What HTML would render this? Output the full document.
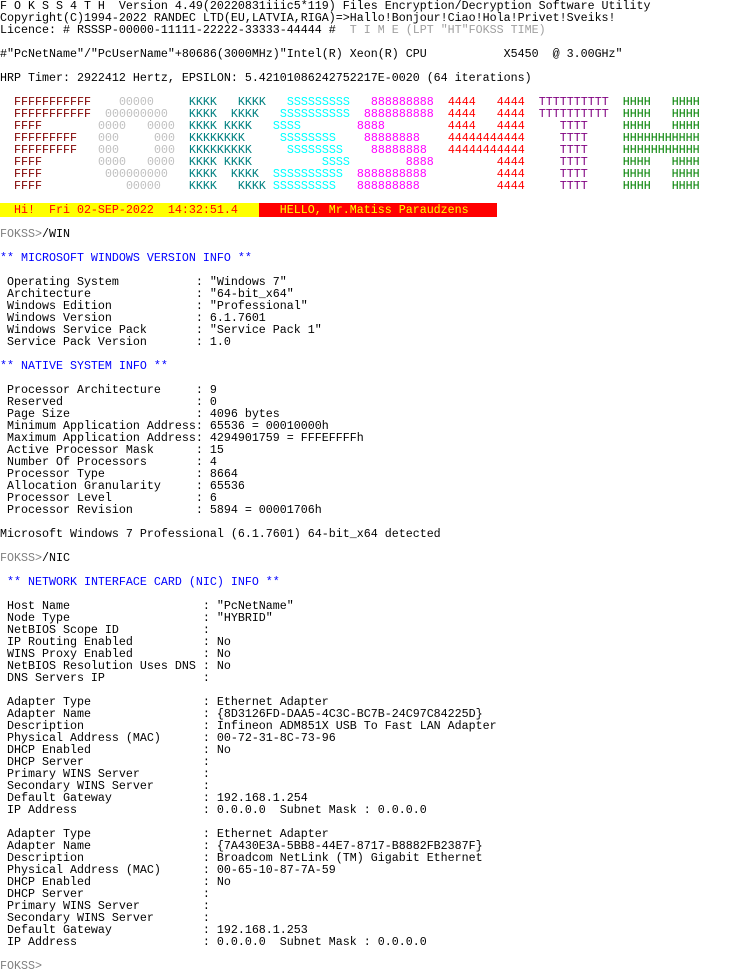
<!DOCTYPE html>
<html><head><meta charset="utf-8">
<style>
html,body{margin:0;padding:0;background:#fff;width:730px;height:974px;overflow:hidden}
pre{margin:0;position:absolute;left:0;top:0;font-family:"Liberation Mono",monospace;font-size:11.67px;line-height:12px;color:#000;white-space:pre}
.g{color:#a0a0a0}.gp{color:#808080}
.b{color:#0000ff}
.F{color:#800000}.O{color:#c0c0c0}.K{color:#008080}.S{color:#00ffff}.E{color:#ff00ff}.R{color:#ff0000}.T{color:#800080}.H{color:#008000}
.yb{background:#ffff00;color:#ff0000}.rb{background:#ff0000;color:#ffff00}
</style></head><body>
<pre>F O K S S 4 T H  Version 4.49(20220831iiic5*119) Files Encryption/Decryption Software Utility
Copyright(C)1994-2022 RANDEC LTD(EU,LATVIA,RIGA)=&gt;Hallo!Bonjour!Ciao!Hola!Privet!Sveiks!
Licence: # RSSSP-00000-11111-22222-33333-44444 #<span class="g">  T I M E (LPT "HT"FOKSS TIME)</span>

#"PcNetName"/"PcUserName"+80686(3000MHz)"Intel(R) Xeon(R) CPU           X5450  @ 3.00GHz"

HRP Timer: 2922412 Hertz, EPSILON: 5.42101086242752217E-0020 (64 iterations)

  <span class="F">FFFFFFFFFFF</span>    <span class="O">00000</span>     <span class="K">KKKK</span>   <span class="K">KKKK</span>   <span class="S">SSSSSSSSS</span>   <span class="E">888888888</span>  <span class="R">4444</span>   <span class="R">4444</span>  <span class="T">TTTTTTTTTT</span>  <span class="H">HHHH</span>   <span class="H">HHHH</span>
  <span class="F">FFFFFFFFFFF</span>  <span class="O">000000000</span>   <span class="K">KKKK</span>  <span class="K">KKKK</span>   <span class="S">SSSSSSSSSS</span>  <span class="E">8888888888</span>  <span class="R">4444</span>   <span class="R">4444</span>  <span class="T">TTTTTTTTTT</span>  <span class="H">HHHH</span>   <span class="H">HHHH</span>
  <span class="F">FFFF</span>        <span class="O">0000</span>   <span class="O">0000</span>  <span class="K">KKKK</span> <span class="K">KKKK</span>   <span class="S">SSSS</span>        <span class="E">8888</span>         <span class="R">4444</span>   <span class="R">4444</span>     <span class="T">TTTT</span>     <span class="H">HHHH</span>   <span class="H">HHHH</span>
  <span class="F">FFFFFFFFF</span>   <span class="O">000</span>     <span class="O">000</span>  <span class="K">KKKKKKKK</span>     <span class="S">SSSSSSSS</span>    <span class="E">88888888</span>    <span class="R">44444444444</span>     <span class="T">TTTT</span>     <span class="H">HHHHHHHHHHH</span>
  <span class="F">FFFFFFFFF</span>   <span class="O">000</span>     <span class="O">000</span>  <span class="K">KKKKKKKKK</span>     <span class="S">SSSSSSSS</span>    <span class="E">88888888</span>   <span class="R">44444444444</span>     <span class="T">TTTT</span>     <span class="H">HHHHHHHHHHH</span>
  <span class="F">FFFF</span>        <span class="O">0000</span>   <span class="O">0000</span>  <span class="K">KKKK</span> <span class="K">KKKK</span>          <span class="S">SSSS</span>        <span class="E">8888</span>         <span class="R">4444</span>     <span class="T">TTTT</span>     <span class="H">HHHH</span>   <span class="H">HHHH</span>
  <span class="F">FFFF</span>         <span class="O">000000000</span>   <span class="K">KKKK</span>  <span class="K">KKKK</span>  <span class="S">SSSSSSSSSS</span>  <span class="E">8888888888</span>          <span class="R">4444</span>     <span class="T">TTTT</span>     <span class="H">HHHH</span>   <span class="H">HHHH</span>
  <span class="F">FFFF</span>            <span class="O">00000</span>    <span class="K">KKKK</span>   <span class="K">KKKK</span> <span class="S">SSSSSSSSS</span>   <span class="E">888888888</span>           <span class="R">4444</span>     <span class="T">TTTT</span>     <span class="H">HHHH</span>   <span class="H">HHHH</span>

<span class="yb">  Hi!  Fri 02-SEP-2022  14:32:51.4   </span><span class="rb">   HELLO, Mr.Matiss Paraudzens    </span>

<span class="gp">FOKSS&gt;</span>/WIN

<span class="b">** MICROSOFT WINDOWS VERSION INFO **</span>

 Operating System           : "Windows 7"
 Architecture               : "64-bit_x64"
 Windows Edition            : "Professional"
 Windows Version            : 6.1.7601
 Windows Service Pack       : "Service Pack 1"
 Service Pack Version       : 1.0

<span class="b">** NATIVE SYSTEM INFO **</span>

 Processor Architecture     : 9
 Reserved                   : 0
 Page Size                  : 4096 bytes
 Minimum Application Address: 65536 = 00010000h
 Maximum Application Address: 4294901759 = FFFEFFFFh
 Active Processor Mask      : 15
 Number Of Processors       : 4
 Processor Type             : 8664
 Allocation Granularity     : 65536
 Processor Level            : 6
 Processor Revision         : 5894 = 00001706h

Microsoft Windows 7 Professional (6.1.7601) 64-bit_x64 detected

<span class="gp">FOKSS&gt;</span>/NIC

 <span class="b">** NETWORK INTERFACE CARD (NIC) INFO **</span>

 Host Name                   : "PcNetName"
 Node Type                   : "HYBRID"
 NetBIOS Scope ID            :
 IP Routing Enabled          : No
 WINS Proxy Enabled          : No
 NetBIOS Resolution Uses DNS : No
 DNS Servers IP              :

 Adapter Type                : Ethernet Adapter
 Adapter Name                : {8D3126FD-DAA5-4C3C-BC7B-24C97C84225D}
 Description                 : Infineon ADM851X USB To Fast LAN Adapter
 Physical Address (MAC)      : 00-72-31-8C-73-96
 DHCP Enabled                : No
 DHCP Server                 :
 Primary WINS Server         :
 Secondary WINS Server       :
 Default Gateway             : 192.168.1.254
 IP Address                  : 0.0.0.0  Subnet Mask : 0.0.0.0

 Adapter Type                : Ethernet Adapter
 Adapter Name                : {7A430E3A-5BB8-44E7-8717-B8882FB2387F}
 Description                 : Broadcom NetLink (TM) Gigabit Ethernet
 Physical Address (MAC)      : 00-65-10-87-7A-59
 DHCP Enabled                : No
 DHCP Server                 :
 Primary WINS Server         :
 Secondary WINS Server       :
 Default Gateway             : 192.168.1.253
 IP Address                  : 0.0.0.0  Subnet Mask : 0.0.0.0

<span class="gp">FOKSS&gt;</span></pre>
</body></html>
